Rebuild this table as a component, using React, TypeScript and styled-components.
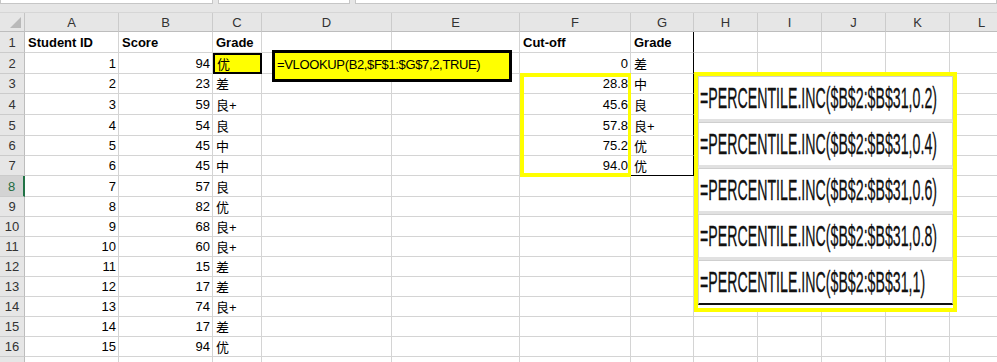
import React from 'react';
import styled, { createGlobalStyle } from 'styled-components';

const GlobalStyle = createGlobalStyle`
  html, body {
    margin: 0;
    padding: 0;
    background: #fff;
    overflow: hidden;
  }
`;

const COLS = ['A', 'B', 'C', 'D', 'E', 'F', 'G', 'H', 'I', 'J', 'K', 'L'];
const WIDTHS = [94, 94, 49, 130, 128, 111, 63, 64, 64, 64, 64, 64];
const HEIGHTS = [21, 21, 20, 21, 21, 20, 20, 21, 20, 20, 20, 20, 20, 20, 20, 20, 20];
const ACTIVE_ROW = 8;
// last row only peeks in under the window edge, so it stays blank
const FILLED_ROWS = 16;

const students: [number, number, string][] = [
  [1, 94, '优'],
  [2, 23, '差'],
  [3, 59, '良+'],
  [4, 54, '良'],
  [5, 45, '中'],
  [6, 45, '中'],
  [7, 57, '良'],
  [8, 82, '优'],
  [9, 68, '良+'],
  [10, 60, '良+'],
  [11, 15, '差'],
  [12, 17, '差'],
  [13, 74, '良+'],
  [14, 17, '差'],
  [15, 94, '优'],
];

const cutoffs: [string, string][] = [
  ['0', '差'],
  ['28.8', '中'],
  ['45.6', '良'],
  ['57.8', '良+'],
  ['75.2', '优'],
  ['94.0', '优'],
];

const percentiles = ['0.2', '0.4', '0.6', '0.8', '1'];

type CellData = { v: string; num?: boolean; bold?: boolean };

const cellAt = (row: number, col: string): CellData | null => {
  if (row === 1) {
    const heads: Record<string, string> = { A: 'Student ID', B: 'Score', C: 'Grade', F: 'Cut-off', G: 'Grade' };
    return heads[col] ? { v: heads[col], bold: true } : null;
  }
  const s = students[row - 2];
  if (s) {
    if (col === 'A') return { v: String(s[0]), num: true };
    if (col === 'B') return { v: String(s[1]), num: true };
    if (col === 'C') return { v: s[2] };
  }
  const c = cutoffs[row - 2];
  if (c) {
    if (col === 'F') return { v: c[0], num: true };
    if (col === 'G') return { v: c[1] };
  }
  return null;
};

const Page = styled.div`
  position: relative;
  width: 997px;
  height: 362px;
  overflow: hidden;
  background: #fff;
  font-family: 'Liberation Sans', 'Noto Sans CJK SC', sans-serif;
`;

const TopStrip = styled.div`
  display: flex;
  gap: 5px;
  height: 13px;
  background: #e6e6e6;
  border-bottom: 1px solid #d6d6d6;
  box-sizing: border-box;
`;

const BarBox = styled.div<{ $w?: number }>`
  height: 3px;
  background: #fff;
  border: 1px solid #c6c6c6;
  border-top: none;
  ${(p) => (p.$w ? `width: ${p.$w}px;` : 'flex: 1;')}
`;

const Sheet = styled.div`
  display: grid;
  grid-template-columns: 25px ${WIDTHS.map((w) => `${w}px`).join(' ')};
  grid-template-rows: 19px ${HEIGHTS.map((h) => `${h}px`).join(' ')};
  width: max-content;
`;

const Corner = styled.div`
  position: relative;
  background: #e6e6e6;
  border-right: 1px solid #c4c4c4;
  border-bottom: 1px solid #bdbdbd;
  box-sizing: border-box;

  &::after {
    content: '';
    position: absolute;
    right: 3px;
    bottom: 3px;
    border-style: solid;
    border-width: 0 0 11px 11px;
    border-color: transparent transparent #b9b9b9 transparent;
  }
`;

const ColHead = styled.div`
  display: flex;
  align-items: center;
  justify-content: center;
  background: #e6e6e6;
  border-right: 1px solid #cbcbcb;
  border-bottom: 1px solid #bdbdbd;
  box-sizing: border-box;
  font-size: 13px;
  color: #333;
`;

const RowHead = styled.div<{ $active?: boolean }>`
  display: flex;
  align-items: center;
  justify-content: center;
  background: ${(p) => (p.$active ? '#d3d3d3' : '#e6e6e6')};
  border-right: ${(p) => (p.$active ? '2px solid #217346' : '1px solid #bdbdbd')};
  border-bottom: 1px solid #cbcbcb;
  box-sizing: border-box;
  font-size: 13px;
  color: ${(p) => (p.$active ? '#1d6b40' : '#333')};
`;

const Cell = styled.div<{ $num?: boolean; $bold?: boolean; $mark?: boolean; $edge?: boolean; $foot?: boolean }>`
  display: flex;
  align-items: center;
  justify-content: ${(p) => (p.$num ? 'flex-end' : 'flex-start')};
  padding: 0 2px 0 3px;
  box-sizing: border-box;
  border-right: 1px solid ${(p) => (p.$edge ? '#000' : '#d4d4d4')};
  border-bottom: 1px solid ${(p) => (p.$foot ? '#000' : '#d4d4d4')};
  font-size: 13px;
  font-weight: ${(p) => (p.$bold ? 700 : 400)};
  color: #000;
  white-space: nowrap;
  overflow: visible;
  ${(p) =>
    p.$mark &&
    `
    background: #ffff00;
    border: 2px solid #000;
    padding-left: 2px;
  `}
`;

const VlookupNote = styled.div`
  position: absolute;
  left: 272px;
  top: 50px;
  width: 240px;
  height: 32px;
  box-sizing: border-box;
  border: 3px solid #000;
  background: #ffff00;
  padding: 4px 0 0 2px;
  font-size: 13px;
  letter-spacing: -0.35px;
  line-height: 16px;
  color: #000;
  white-space: nowrap;
`;

const CutoffRing = styled.div`
  position: absolute;
  left: 520px;
  top: 73px;
  width: 111px;
  height: 104px;
  box-sizing: border-box;
  border: 4px solid #ffff00;
  border-right-width: 3px;
  pointer-events: none;
`;

const FormulaPanel = styled.div`
  position: absolute;
  left: 694px;
  top: 72px;
  width: 263px;
  height: 240px;
  box-sizing: border-box;
  border: 4px solid #ffff00;
  background: #fff;
  display: flex;
  flex-direction: column;
`;

const FormulaRow = styled.div<{ $last?: boolean }>`
  flex: 1;
  display: flex;
  align-items: center;
  overflow: hidden;
  background: #fff;
  border: 1px solid #cfcfcf;
  border-bottom: ${(p) => (p.$last ? '2px solid #111' : '3px solid #e1e1e1')};
  margin-bottom: ${(p) => (p.$last ? '3px' : '0')};
`;

const FormulaText = styled.span`
  display: inline-block;
  margin-left: 1px;
  font-size: 30px;
  line-height: 30px;
  color: #111;
  white-space: nowrap;
  transform: scaleX(0.473);
  transform-origin: left center;
  -webkit-text-stroke: 0.3px #111;
`;

export default function App() {
  const cells: React.ReactNode[] = [];

  cells.push(<Corner key="corner" />);
  COLS.forEach((c) => cells.push(<ColHead key={`h-${c}`}>{c}</ColHead>));

  HEIGHTS.forEach((_, i) => {
    const row = i + 1;
    cells.push(
      <RowHead key={`r-${row}`} $active={row === ACTIVE_ROW}>
        {row <= FILLED_ROWS ? row : null}
      </RowHead>
    );
    COLS.forEach((col) => {
      const d = cellAt(row, col);
      cells.push(
        <Cell
          key={`${col}${row}`}
          $num={d?.num}
          $bold={d?.bold}
          $mark={col === 'C' && row === 2}
          $edge={col === 'G' && row <= 7}
          $foot={col === 'G' && row === 7}
        >
          {d?.v}
        </Cell>
      );
    });
  });

  return (
    <>
      <GlobalStyle />
      <Page>
        <TopStrip>
          <BarBox $w={211} />
          <BarBox $w={130} />
          <BarBox />
        </TopStrip>
        <Sheet>{cells}</Sheet>

        <VlookupNote>=VLOOKUP(B2,$F$1:$G$7,2,TRUE)</VlookupNote>
        <CutoffRing />
        <FormulaPanel>
          {percentiles.map((p, i) => (
            <FormulaRow key={p} $last={i === percentiles.length - 1}>
              <FormulaText>{`=PERCENTILE.INC($B$2:$B$31,${p})`}</FormulaText>
            </FormulaRow>
          ))}
        </FormulaPanel>
      </Page>
    </>
  );
}
